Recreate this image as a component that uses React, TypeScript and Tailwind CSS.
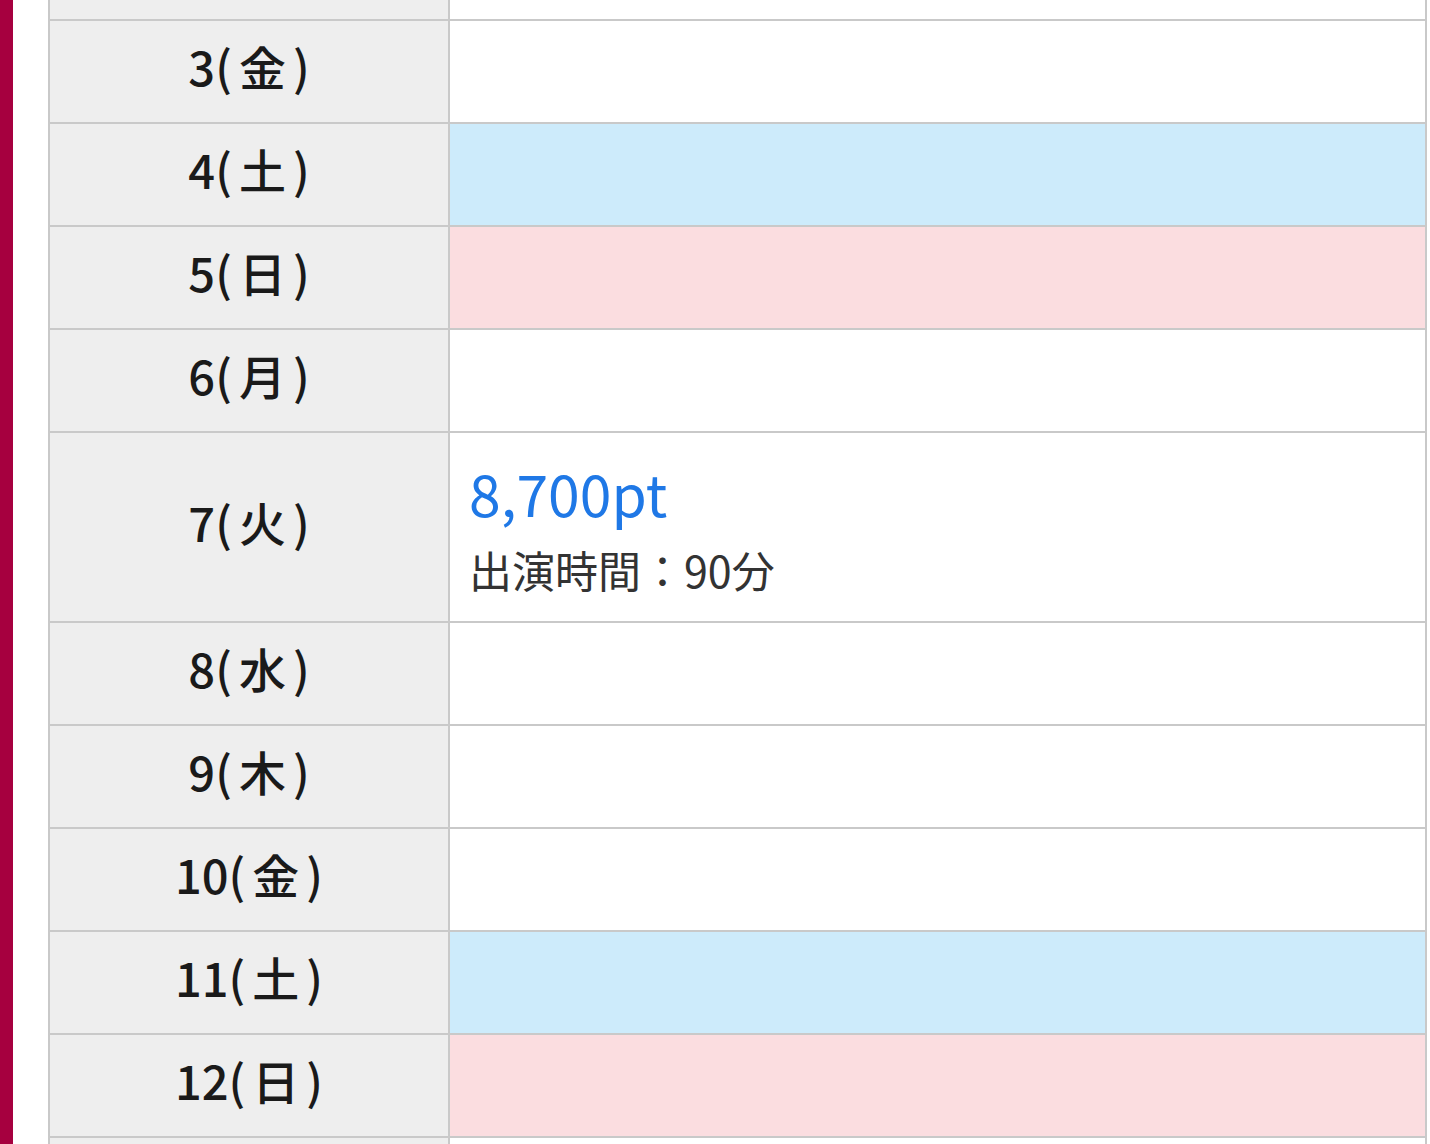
import React from 'react';

type Row = {
  day: string;
  wd: string;
  tone?: 'sat' | 'sun';
  pt?: string;
  time?: string;
};

const rows: Row[] = [
  { day: '2', wd: '木' },
  { day: '3', wd: '金' },
  { day: '4', wd: '土', tone: 'sat' },
  { day: '5', wd: '日', tone: 'sun' },
  { day: '6', wd: '月' },
  { day: '7', wd: '火', pt: '8,700pt', time: '出演時間：90分' },
  { day: '8', wd: '水' },
  { day: '9', wd: '木' },
  { day: '10', wd: '金' },
  { day: '11', wd: '土', tone: 'sat' },
  { day: '12', wd: '日', tone: 'sun' },
  { day: '13', wd: '月' },
];

const App: React.FC = () => {
  return (
    <div
      className="flex h-[1144px] overflow-hidden bg-white"
      style={{ fontFamily: '"Noto Sans CJK JP", "Noto Sans", sans-serif' }}
    >
      {/* side accent */}
      <div className="w-[13px] shrink-0 bg-[#a6003f]" />

      <div className="flex-1 pl-[35px] pr-[3px]">
        {/* schedule table */}
        <div className="-mt-[82px] border-x-2 border-[#c9c9c9]">
          {rows.map((r) => {
            const bg =
              r.tone === 'sat' ? 'bg-[#cdebfb]' : r.tone === 'sun' ? 'bg-[#fbdde0]' : 'bg-white';
            return (
              <div
                key={r.day}
                className={`flex border-b-2 border-[#c9c9c9] ${r.pt ? 'h-[190px]' : 'h-[103px]'}`}
              >
                <div className="flex w-[400px] shrink-0 items-center justify-center border-r-2 border-[#c9c9c9] bg-[#eeeeee] pb-[10px] text-[47px] font-medium text-[#1a1a1a]">
                  <span>{r.day}(</span>
                  <span className="mx-[7px]">{r.wd}</span>
                  <span>)</span>
                </div>
                <div className={`flex flex-1 flex-col justify-center pl-[19px] ${bg}`}>
                  {r.pt && (
                    <>
                      <div className="text-[57px] leading-[64px] text-[#1f78e6]">{r.pt}</div>
                      <div className="mt-[19px] text-[43px] leading-[52px] text-[#333333]">{r.time}</div>
                    </>
                  )}
                </div>
              </div>
            );
          })}
        </div>
      </div>
    </div>
  );
};

export default App;
